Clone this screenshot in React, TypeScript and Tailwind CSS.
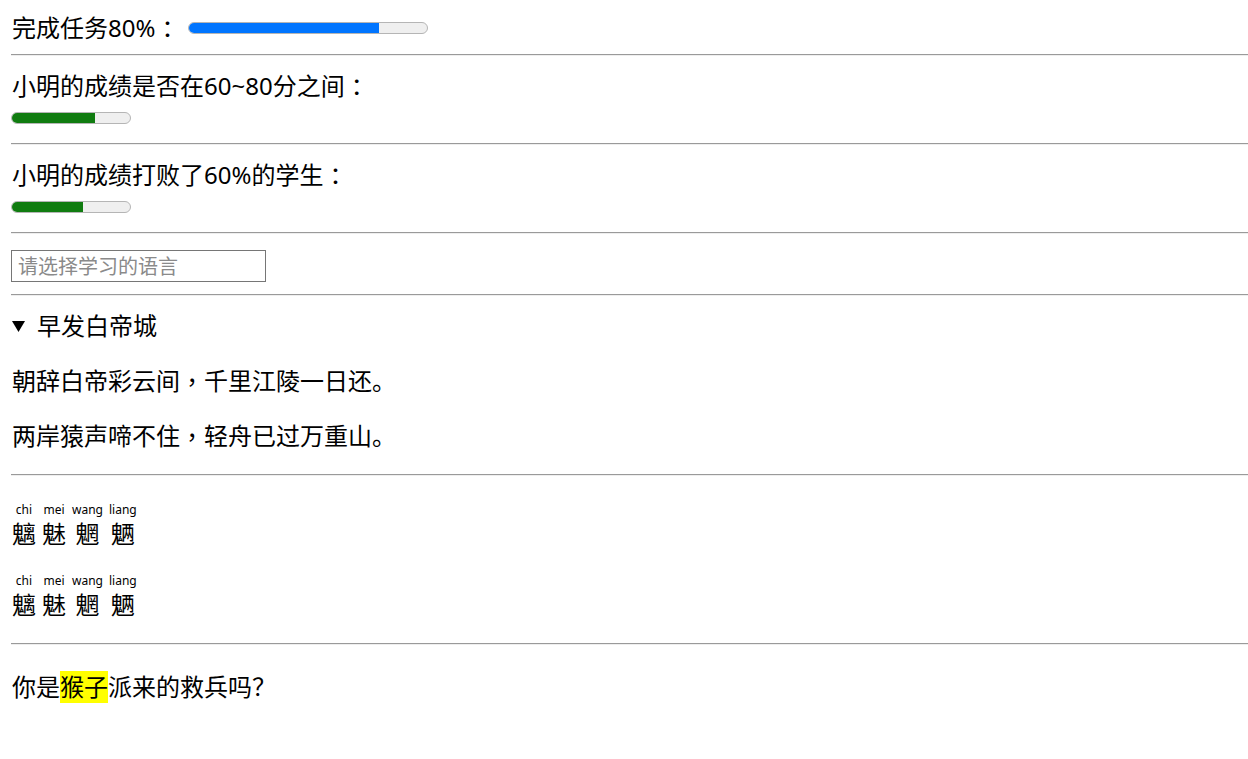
import React from "react";

const font = { fontFamily: '"Noto Sans", "Noto Sans CJK SC", sans-serif' };

function T({ s }: { s: string }) {
  const parts = s.split(/([，：])/);
  return (
    <>
      {parts.map((p, i) =>
        p === "，" || p === "：" ? (
          <span key={i} className="align-top" style={{ fontFamily: '"Noto Sans CJK TC", sans-serif' }}>{p}</span>
        ) : (
          <React.Fragment key={i}>{p}</React.Fragment>
        )
      )}
    </>
  );
}

function Hr() {
  return <div className="h-[2px] border-t border-t-[#9a9a9a] border-b border-b-[#eeeeee]" />;
}

function Bar({ pct, color, w }: { pct: number; color: string; w: string }) {
  return (
    <div className={`${w} h-[12px] rounded-full border border-[#b5b5b5] bg-[#efefef] overflow-hidden flex`}>
      <div className={`h-full ${color}`} style={{ width: `${pct}%` }} />
    </div>
  );
}

function Ruby() {
  const items = [
    { b: "魑", t: "chi" },
    { b: "魅", t: "mei" },
    { b: "魍", t: "wang" },
    { b: "魉", t: "liang" },
  ];
  return (
    <div className="flex gap-[6px] pl-[1px]">
      {items.map((it) => (
        <div key={it.b} className="flex flex-col items-center min-w-[24px]">
          <div className="text-[12px] leading-[14px] h-[14px] whitespace-nowrap mt-[1px]">{it.t}</div>
          <div className="text-[24px] leading-[32px] mt-[1px]">{it.b}</div>
        </div>
      ))}
    </div>
  );
}

export default function App() {
  return (
    <div className="bg-white text-black w-[1248px] h-[759px] overflow-hidden pl-[11px]" style={font}>
      <div className="flex items-center h-[32px] mt-[12px] text-[24px] leading-[32px]">
        <span className="pl-[1px] w-[177px] whitespace-nowrap"><T s="完成任务80%：" /></span>
        <Bar pct={80} color="bg-[#0075ff]" w="w-[240px]" />
      </div>
      <div className="mt-[10px]"><Hr /></div>

      <div className="mt-[14px] h-[32px] text-[24px] leading-[32px] pl-[1px]"><T s="小明的成绩是否在60~80分之间：" /></div>
      <div className="mt-[10px]"><Bar pct={70} color="bg-[#107c10]" w="w-[120px]" /></div>
      <div className="mt-[19px]"><Hr /></div>

      <div className="mt-[14px] h-[32px] text-[24px] leading-[32px] pl-[1px]"><T s="小明的成绩打败了60%的学生：" /></div>
      <div className="mt-[10px]"><Bar pct={60} color="bg-[#107c10]" w="w-[120px]" /></div>
      <div className="mt-[19px]"><Hr /></div>

      <div className="mt-[16px] h-[32px]">
        <input
          placeholder="请选择学习的语言"
          className="block w-[255px] h-[32px] border border-[#767676] px-[6px] text-[20px] leading-[30px] placeholder:text-[#8a8a8a] outline-none"
          style={font}
        />
      </div>
      <div className="mt-[12px]"><Hr /></div>

      <div className="mt-[14px] flex items-center h-[32px] text-[24px] leading-[32px] pl-[1px]">
        <svg width="13" height="11" viewBox="0 0 13 11" className="mt-[1px]">
          <polygon points="0,0 13,0 6.5,11" fill="#000" />
        </svg>
        <span className="ml-[12px]">早发白帝城</span>
      </div>
      <div className="mt-[23px] h-[32px] text-[24px] leading-[32px] pl-[1px]"><T s="朝辞白帝彩云间，千里江陵一日还。" /></div>
      <div className="mt-[23px] h-[32px] text-[24px] leading-[32px] pl-[1px]"><T s="两岸猿声啼不住，轻舟已过万重山。" /></div>
      <div className="mt-[22px]"><Hr /></div>

      <div className="mt-[26px]"><Ruby /></div>
      <div className="mt-[23px]"><Ruby /></div>
      <div className="mt-[22px]"><Hr /></div>

      <div className="mt-[26px] text-[24px] leading-[32px] pl-[1px] flex">
        <span>你是</span>
        <span className="bg-[#ffff00]">猴子</span>
        <span>派来的救兵吗？</span>
      </div>
    </div>
  );
}
